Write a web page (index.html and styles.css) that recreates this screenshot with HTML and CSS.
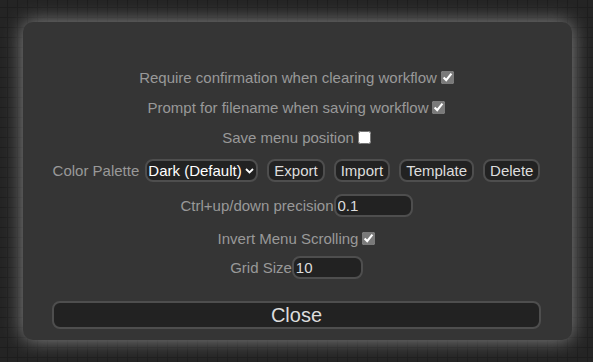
FILE: index.html
```html
<!DOCTYPE html>
<html>

<head>
    <title>Settings</title>
    <link rel="stylesheet" href="styles.css">
</head>

<body>
    <div class="comfy-modal">
        <div class="comfy-modal-content">
            <div class="setting row-check">
                <label for="confirm-clear">Require confirmation when clearing workflow</label>
                <input type="checkbox" id="confirm-clear" checked>
            </div>
            <div class="setting row-check">
                <label for="prompt-filename">Prompt for filename when saving workflow</label>
                <input type="checkbox" id="prompt-filename" checked>
            </div>
            <div class="setting row-check">
                <label for="save-menu">Save menu position</label>
                <input type="checkbox" id="save-menu">
            </div>
            <div class="setting row-palette">
                <label for="palette">Color Palette</label>
                <span class="select-wrap">
                    <select id="palette">
                        <option>Dark (Default)</option>
                        <option>Light</option>
                        <option>Solarized</option>
                    </select>
                    <svg class="chevron" width="9" height="6" viewBox="0 0 9 6">
                        <path d="M1 1 L4.5 4.5 L8 1" fill="none" stroke="#ffffff" stroke-width="1.8"/>
                    </svg>
                </span>
                <button>Export</button>
                <button>Import</button>
                <button>Template</button>
                <button>Delete</button>
            </div>
            <div class="setting row-precision">
                <label for="precision">Ctrl+up/down precision</label><input type="text" id="precision" class="num-input" value="0.1">
            </div>
            <div class="setting row-invert">
                <label for="invert">Invert Menu Scrolling</label>
                <input type="checkbox" id="invert" checked>
            </div>
            <div class="setting row-grid">
                <label for="grid-size">Grid Size</label><input type="text" id="grid-size" class="grid-input" value="10">
            </div>
            <button class="close-btn">Close</button>
        </div>
    </div>
</body>

</html>
```

FILE: styles.css
```css
body {
    margin: 0;
    height: 362px;
    overflow: hidden;
    font-family: "Liberation Sans", Arial, sans-serif;
    background-color: #242424;
    background-image:
        linear-gradient(to right, #1d1d1d 1px, transparent 1px),
        linear-gradient(to bottom, #1d1d1d 1px, transparent 1px);
    background-size: 10px 10px;
    background-position: 7px 7px;
}

.comfy-modal {
    margin: 22px 0 0 23px;
    width: 549px;
    height: 318px;
    box-sizing: border-box;
    padding: 40px 31px 0 29px;
    background-color: #353535;
    border-radius: 10px;
    box-shadow: 0 0 20px #888888;
    color: #999999;
    font-size: 15px;
}

.comfy-modal-content {
    display: flex;
    flex-direction: column;
    align-items: center;
}

.setting {
    display: flex;
    align-items: center;
    justify-content: center;
    white-space: nowrap;
}

.setting > * {
    flex-shrink: 0;
}

.row-check {
    height: 30px;
}

.row-palette {
    height: 36px;
    gap: 9px;
}

.row-palette label {
    margin-right: -3px;
}

.row-precision {
    height: 34px;
}

.row-invert {
    height: 32px;
}

.row-grid {
    height: 26px;
}

input[type="checkbox"] {
    width: 13px;
    height: 13px;
    margin: 0 0 0 4px;
    accent-color: #7a7a7a;
}

select,
button,
input[type="text"] {
    font-family: "Liberation Sans", Arial, sans-serif;
    font-size: 15px;
    color: #dddddd;
    background-color: #222222;
    border: 2px solid #4e4e4e;
    border-radius: 8px;
}

.select-wrap {
    position: relative;
    display: flex;
}

select {
    appearance: none;
    height: 23px;
    padding: 0 14px 0 1px;
    color: #ffffff;
}

.chevron {
    position: absolute;
    right: 4px;
    top: 9px;
    pointer-events: none;
}

button {
    height: 23px;
    padding: 0 5px;
    cursor: pointer;
}

input[type="text"] {
    height: 23px;
    box-sizing: border-box;
    padding: 0 2px;
    outline: none;
}

.num-input {
    width: 79px;
}

.grid-input {
    width: 71px;
}

.close-btn {
    margin-top: 21px;
    width: 100%;
    height: 28px;
    font-size: 20px;
}
```
